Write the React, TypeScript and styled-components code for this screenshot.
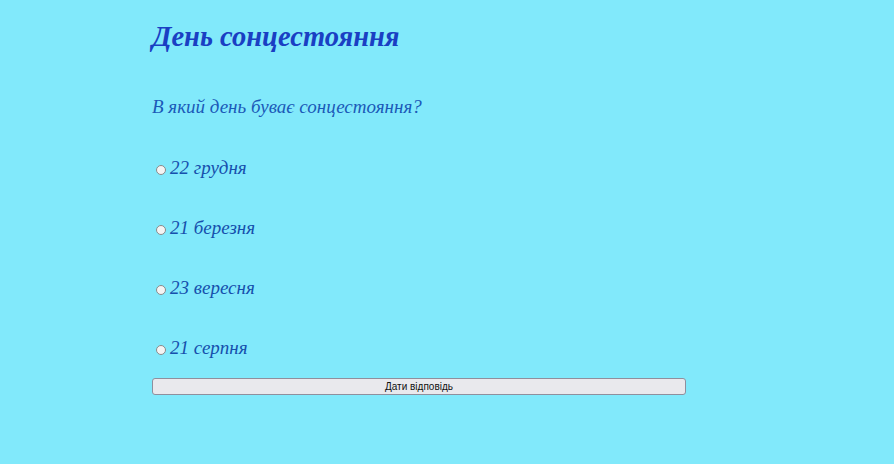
import React from "react";
import styled, { createGlobalStyle } from "styled-components";

const Global = createGlobalStyle`
  html, body { margin: 0; padding: 0; background: #81e9fb; }
  body { font-family: "Liberation Serif", "Times New Roman", serif; }
`;

const Page = styled.div`
  width: 894px;
  height: 464px;
  background: #81e9fb;
  box-sizing: border-box;
  padding: 20px 0 0 150px;
`;

const Title = styled.h1`
  margin: 0 0 0 2px;
  font-family: "Liberation Serif", serif;
  font-style: italic;
  font-weight: bold;
  font-size: 28.5px;
  line-height: 34px;
  color: #1a3fc3;
`;

const Question = styled.p`
  margin: 41px 0 0 2px;
  font-style: italic;
  font-size: 19px;
  line-height: 24px;
  color: #1b5ab8;
`;

const Options = styled.div`
  display: flex;
  flex-direction: column;
  gap: 36px;
  margin-top: 37px;
`;

const Option = styled.label`
  display: flex;
  align-items: center;
  height: 24px;
  font-style: italic;
  font-size: 19px;
  color: #1650ad;
  padding-left: 6px;
`;

const Radio = styled.input`
  appearance: none;
  width: 10px;
  height: 10px;
  margin: 3px 4px 0 0;
  border-radius: 50%;
  border: 1px solid #8a8a8a;
  background: #f4f4f4;
  box-sizing: border-box;
`;

const Button = styled.button`
  display: block;
  margin: 18px 0 0 2px;
  width: 534px;
  height: 17px;
  padding: 0;
  border: 1px solid #8f8f9d;
  border-radius: 3px;
  background: #e9e9ed;
  font-family: "Liberation Sans", Arial, sans-serif;
  font-size: 10px;
  color: #111;
`;

const answers = ["22 грудня", "21 березня", "23 вересня", "21 серпня"];

export default function App() {
  return (
    <Page>
      <Global />
      <Title>День сонцестояння</Title>
      <Question>В який день буває сонцестояння?</Question>
      <Options>
        {answers.map((a) => (
          <Option key={a}>
            <Radio type="radio" name="q" />
            {a}
          </Option>
        ))}
      </Options>
      <Button>Дати відповідь</Button>
    </Page>
  );
}
